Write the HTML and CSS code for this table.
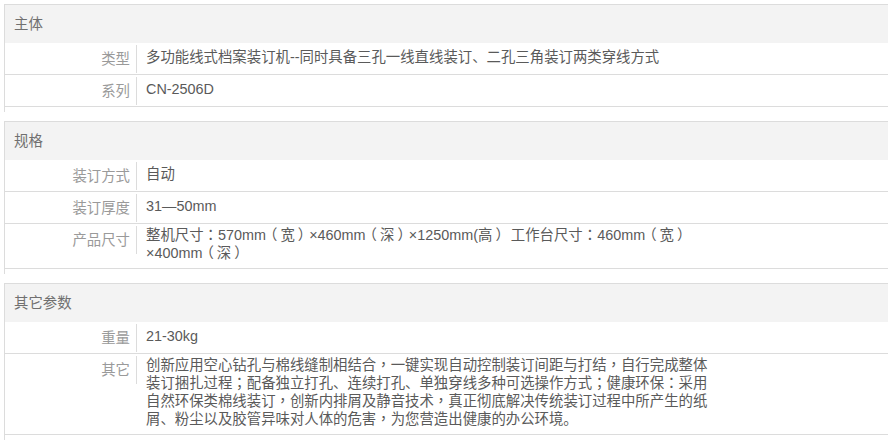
FILE: index.html
```html
<!DOCTYPE html>
<html lang="zh-CN">
<head>
<meta charset="utf-8">
<title>参数</title>
<link rel="stylesheet" href="styles.css">
</head>
<body>
<div class="spec">
  <div class="group">
    <div class="group-title">主体</div>
    <div class="row"><div class="label">类型</div><div class="value">多功能线式档案装订机--同时具备三孔一线直线装订、二孔三角装订两类穿线方式</div></div>
    <div class="row"><div class="label">系列</div><div class="value">CN-2506D</div></div>
  </div>
  <div class="group">
    <div class="group-title">规格</div>
    <div class="row"><div class="label">装订方式</div><div class="value">自动</div></div>
    <div class="row"><div class="label">装订厚度</div><div class="value">31—50mm</div></div>
    <div class="row"><div class="label">产品尺寸</div><div class="value">整机尺寸<span class="p" lang="zh-Hant">：</span>570mm<span class="p po" lang="zh-Hant">（</span>宽<span class="p pc" lang="zh-Hant">）</span>×460mm<span class="p po" lang="zh-Hant">（</span>深<span class="p pc" lang="zh-Hant">）</span>×1250mm(高<span class="p pc" lang="zh-Hant">）</span> 工作台尺寸<span class="p" lang="zh-Hant">：</span>460mm<span class="p po" lang="zh-Hant">（</span>宽<span class="p pc" lang="zh-Hant">）</span>×400mm<span class="p po" lang="zh-Hant">（</span>深<span class="p pc" lang="zh-Hant">）</span></div></div>
  </div>
  <div class="group">
    <div class="group-title">其它参数</div>
    <div class="row"><div class="label">重量</div><div class="value">21-30kg</div></div>
    <div class="row"><div class="label">其它</div><div class="value">创新应用空心钻孔与棉线缝制相结合<span class="p" lang="zh-Hant">，</span>一键实现自动控制装订间距与打结<span class="p" lang="zh-Hant">，</span>自行完成整体装订捆扎过程<span class="p" lang="zh-Hant">；</span>配备独立打孔、连续打孔、单独穿线多种可选操作方式<span class="p" lang="zh-Hant">；</span>健康环保<span class="p" lang="zh-Hant">：</span>采用自然环保类棉线装订<span class="p" lang="zh-Hant">，</span>创新内排屑及静音技术<span class="p" lang="zh-Hant">，</span>真正彻底解决传统装订过程中所产生的纸屑、粉尘以及胶管异味对人体的危害<span class="p" lang="zh-Hant">，</span>为您营造出健康的办公环境。</div></div>
  </div>
</div>
</body>
</html>
```
FILE: styles.css
```css
html, body {
  margin: 0;
  padding: 0;
  background: #fff;
}
body {
  font-family: "Liberation Sans", "Noto Sans CJK SC", sans-serif;
  font-size: 14.4px;
  color: #666;
}
.spec {
  padding: 4px 0 0 4px;
  width: 884px;
}
.group {
  border-top: 1px solid #dcdcdc;
  border-left: 1px solid #dcdcdc;
  padding-bottom: 5px;
  margin-bottom: 9px;
}
.group-title {
  height: 38px;
  line-height: 38px;
  background: #f3f3f3;
  padding-left: 9px;
  color: #707070;
}
.row {
  display: flex;
  min-height: 31px;
  border-bottom: 1px solid #dcdcdc;
}
.label {
  flex: none;
  align-self: flex-start;
  width: 125px;
  margin: 2px 0 1px;
  height: 28px;
  line-height: 28px;
  padding-right: 6px;
  text-align: right;
  color: #9a9a9a;
  border-right: 1px solid #dcdcdc;
}
.value {
  align-self: center;
  width: 568px;
  padding: 2px 0 6px 9px;
  line-height: 18px;
  color: #5a5a5a;
}
.p {
  font-family: "Noto Sans CJK TC", sans-serif;
  line-height: 1;
}
.po {
  margin-left: -3px;
  margin-right: 3px;
}
.pc {
  margin-left: 3px;
  margin-right: -3px;
}
```
